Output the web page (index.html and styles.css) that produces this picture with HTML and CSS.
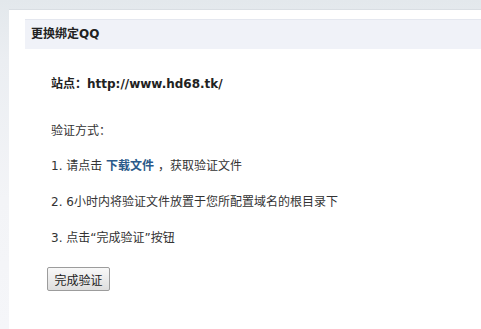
FILE: index.html
```html
<!DOCTYPE html>
<html lang="zh-CN">
<head>
<meta charset="utf-8">
<title>更换绑定QQ</title>
<link rel="stylesheet" href="styles.css">
</head>
<body>
<div class="page">
  <div class="panel">
    <div class="header">更换绑定QQ</div>
    <div class="content">
      <p class="site">站点：http://www.hd68.tk/</p>
      <p class="label">验证方式：</p>
      <p class="step">1. 请点击 <a class="link" href="#">下载文件</a> ，获取验证文件</p>
      <p class="step">2. 6小时内将验证文件放置于您所配置域名的根目录下</p>
      <p class="step">3. 点击“完成验证”按钮</p>
      <button class="btn" type="button">完成验证</button>
    </div>
  </div>
</div>
</body>
</html>
```
FILE: styles.css
```css
html, body {
  margin: 0;
  padding: 0;
  height: 100%;
}
body {
  background: linear-gradient(to bottom, #e3e8ec 0px, #ebeef2 60px, #f3f4f7 200px, #f5f6f9 100%);
  font-family: "DejaVu Sans", "Noto Sans CJK SC", sans-serif;
  font-size: 12px;
  color: #333;
}
.page {
  padding: 9px 0 0 9px;
  height: 100%;
  box-sizing: border-box;
}
.panel {
  background: #fff;
  height: 100%;
  border-top: 1px solid #d9dee3;
  box-sizing: border-box;
  padding-top: 9px;
}
.header {
  margin-left: 16px;
  height: 30px;
  box-sizing: border-box;
  border-top: 1px solid #e4e7ef;
  background: #f0f2f8;
  padding-left: 6px;
  line-height: 29px;
  font-weight: bold;
  color: #222;
}
.content {
  display: flex;
  flex-direction: column;
  align-items: flex-start;
  padding-left: 42px;
}
.content p {
  margin: 0;
  line-height: 16px;
}
.site {
  margin-top: 27px !important;
  font-weight: bold;
  color: #222;
}
.label {
  margin-top: 31px !important;
}
.step {
  margin-top: 20px !important;
}
.content .label + .step {
  margin-top: 19px !important;
}
.link {
  color: #2b5a8a;
  font-weight: bold;
  text-decoration: none;
}
.btn {
  margin-top: 21px;
  margin-left: -4px;
  width: 63px;
  height: 24px;
  padding: 0;
  font-family: "DejaVu Sans", "Noto Sans CJK SC", sans-serif;
  font-size: 12px;
  color: #222;
  background: linear-gradient(to bottom, #f8f8f8, #dedede);
  border: 1px solid #9c9c9c;
  border-radius: 2px;
}
```
